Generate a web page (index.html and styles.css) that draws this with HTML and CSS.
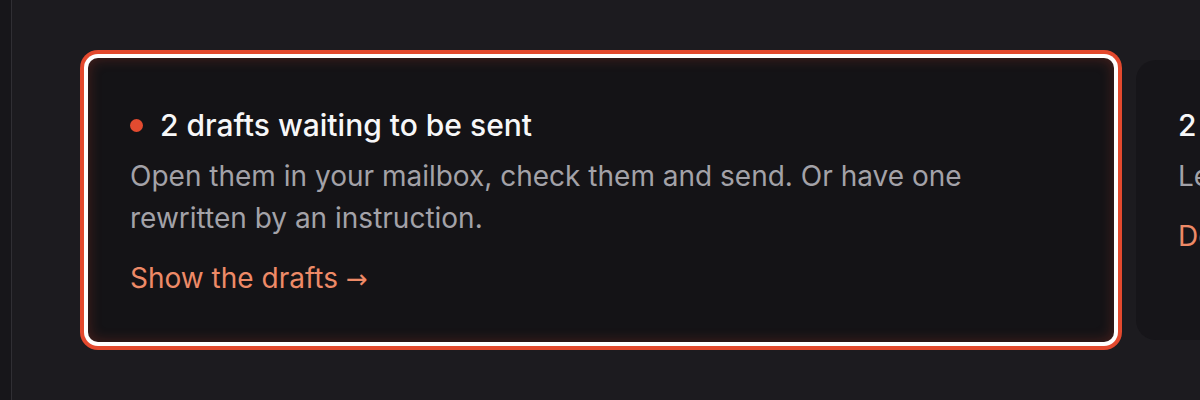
FILE: index.html
```html
<!DOCTYPE html>
<html lang="en">
<head>
<meta charset="utf-8">
<title>Drafts</title>
<link rel="stylesheet" href="styles.css">
</head>
<body>
<div class="app">
  <aside class="sidebar"></aside>
  <main class="main">
    <div class="cards">
      <section class="card card-active">
        <h2 class="card-title"><span class="dot"></span>2 drafts waiting to be sent</h2>
        <p class="card-text">Open them in your mailbox, check them and send. Or have one rewritten by an instruction.</p>
        <a class="card-link" href="#">Show the drafts <span class="arrow">→</span></a>
      </section>
      <section class="card">
        <h2 class="card-title">2 meetings need a reply</h2>
        <p class="card-text">Let us know which times suit you best.</p>
        <a class="card-link" href="#">Decide now <span class="arrow">→</span></a>
      </section>
    </div>
  </main>
</div>
</body>
</html>
```
FILE: styles.css
```css
* { box-sizing: border-box; }
html, body { margin: 0; height: 100%; }
body {
  background: #1c1b1f;
  font-family: Inter, "Noto Sans", sans-serif;
  overflow: hidden;
}
.app { display: flex; height: 400px; }
.sidebar {
  width: 12px;
  flex: none;
  background: #17161a;
  border-right: 1px solid #302f34;
}
.main {
  flex: 1;
  min-width: 0;
  padding: 58px 0 0 76px;
  overflow: hidden;
}
.cards {
  display: flex;
  align-items: center;
  gap: 22px;
}
.card {
  flex: none;
  width: 1026px;
  height: 280px;
  border-radius: 20px;
  background: #161519;
  padding: 47px 42px 0;
}
.card-active {
  height: 284px;
  padding-top: 49px;
  border-radius: 10px;
  background: #141316;
  box-shadow:
    0 0 0 4px #ffffff,
    0 0 0 8px #e3492e,
    inset 0 0 14px rgba(220, 70, 45, 0.28);
}
.card-title {
  margin: 0;
  display: flex;
  align-items: center;
  font-size: 30px;
  font-weight: 500;
  line-height: 36px;
  color: #f7f7f8;
}
.dot {
  width: 13px;
  height: 13px;
  border-radius: 50%;
  background: #e34b30;
  margin-right: 17px;
}
.card-text {
  margin: 12px 0 0;
  max-width: 870px;
  font-size: 28px;
  line-height: 42px;
  color: #a3a2a8;
}
.card-link {
  display: inline-block;
  margin-top: 18px;
  font-size: 28px;
  line-height: 42px;
  color: #ee8a67;
  text-decoration: none;
}
.arrow {
  font-family: "DejaVu Sans", sans-serif;
  font-size: 26px;
}
```
